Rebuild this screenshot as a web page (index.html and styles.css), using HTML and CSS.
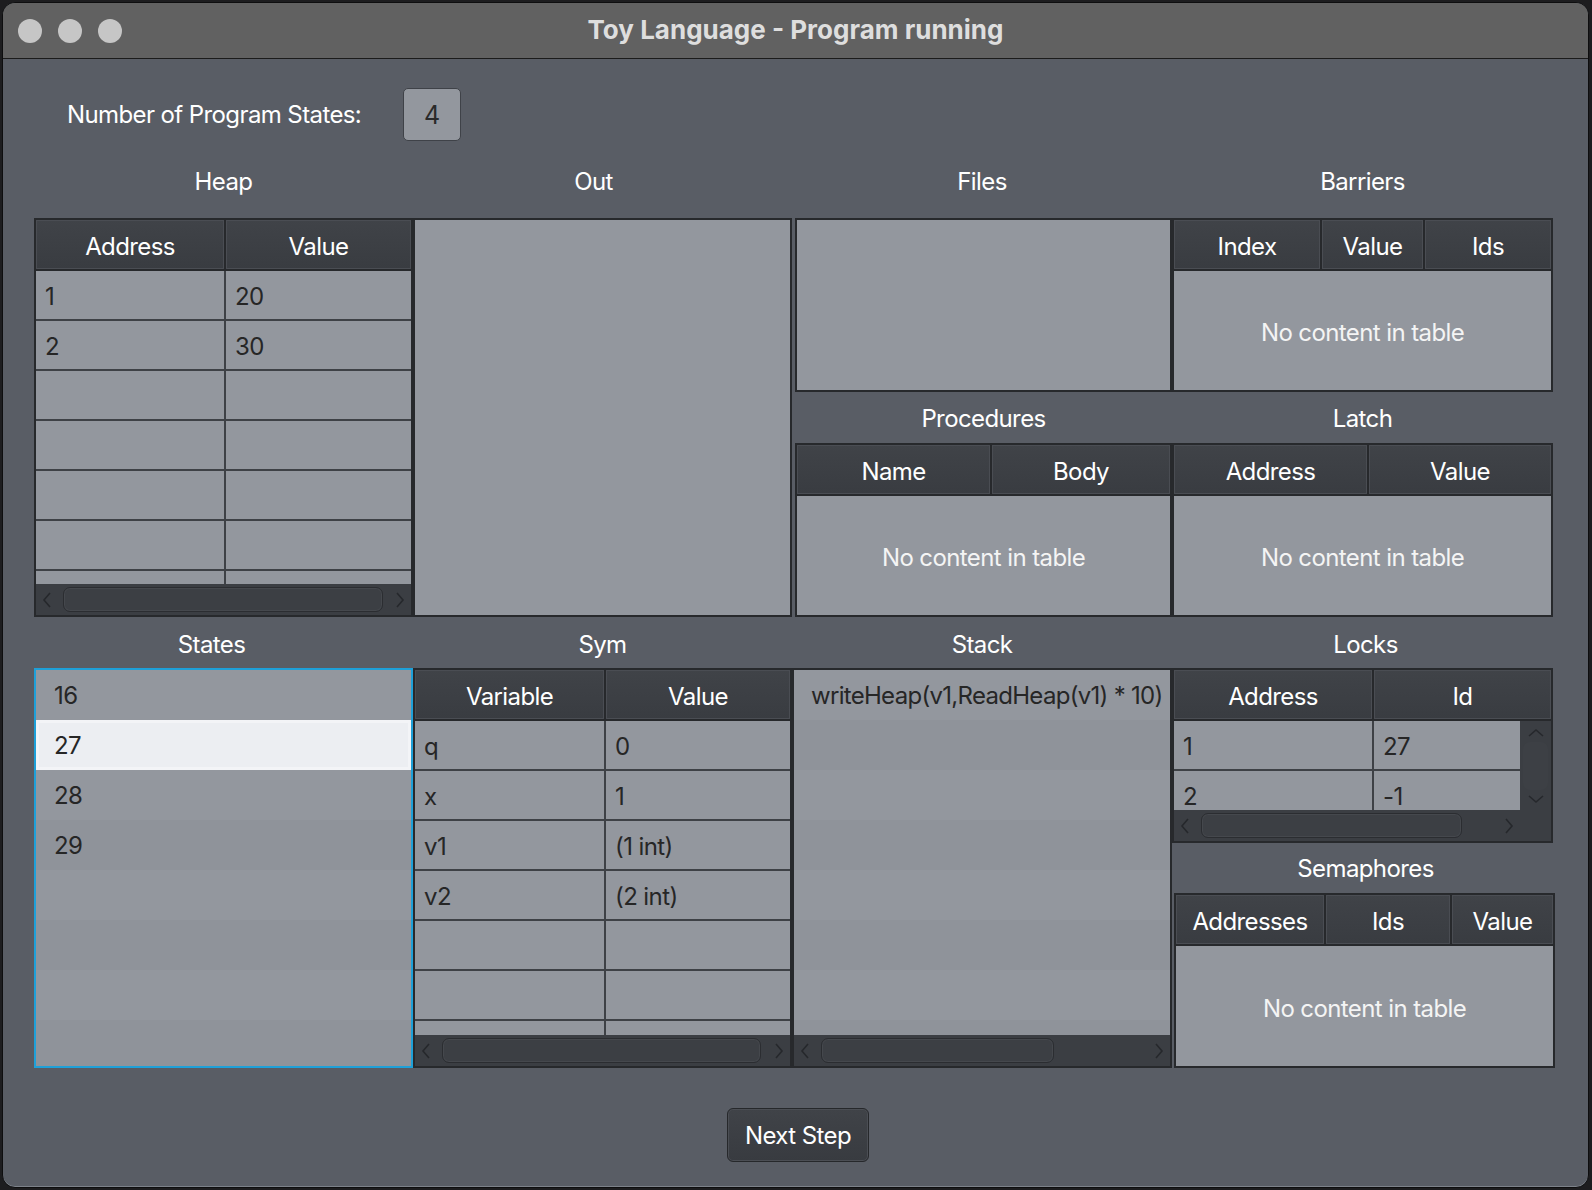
FILE: index.html
```html
<!DOCTYPE html>
<html lang="en">
<head>
<meta charset="utf-8">
<title>Toy Language - Program running</title>
<link rel="stylesheet" href="styles.css">
</head>
<body>
<div class="window">
  <header class="titlebar">
    <div class="lights"><span class="light"></span><span class="light"></span><span class="light"></span></div>
    <div class="title">Toy Language - Program running</div>
    <div></div>
  </header>

  <main class="content">
    <div class="count-row">
      <span class="count-label">Number of Program States:</span>
      <div class="count-box">4</div>
    </div>

    <div class="grid grid-top">
      <div class="label label-top c1">Heap</div>
      <div class="label label-top c2 out-label">Out</div>
      <div class="label label-top c3">Files</div>
      <div class="label label-top c4">Barriers</div>

      <div class="table c1 r-span">
        <div class="thead cols-heap"><div class="th">Address</div><div class="th">Value</div></div>
        <div class="tbody-wrap">
          <div class="tbody cols-heap">
            <div class="td">1</div><div class="td">20</div>
            <div class="td">2</div><div class="td">30</div>
            <div class="td"></div><div class="td"></div>
            <div class="td"></div><div class="td"></div>
            <div class="td"></div><div class="td"></div>
            <div class="td"></div><div class="td"></div>
            <div class="td"></div><div class="td"></div>
          </div>
        </div>
        <div class="hscroll">
          <svg class="arrow" viewBox="0 0 10 16"><polyline points="8,1 2,8 8,15"/></svg>
          <div class="thumb" style="width:320px"></div>
          <div class="spacer"></div>
          <svg class="arrow" viewBox="0 0 10 16"><polyline points="2,1 8,8 2,15"/></svg>
        </div>
      </div>

      <div class="box c2 r-span"></div>

      <div class="box c3 shift files"></div>

      <div class="table c4 barriers">
        <div class="thead cols-barriers"><div class="th">Index</div><div class="th">Value</div><div class="th">Ids</div></div>
        <div class="empty">No content in table</div>
      </div>

      <div class="label label-mid c3 shift">Procedures</div>
      <div class="label label-mid c4">Latch</div>

      <div class="table c3 shift procedures">
        <div class="thead cols-proc"><div class="th">Name</div><div class="th">Body</div></div>
        <div class="empty">No content in table</div>
      </div>
      <div class="table c4 latch">
        <div class="thead cols-latch"><div class="th">Address</div><div class="th">Value</div></div>
        <div class="empty">No content in table</div>
      </div>
    </div>

    <div class="grid grid-bottom">
      <div class="label label-bot c1 states-label">States</div>
      <div class="label label-bot c2">Sym</div>
      <div class="label label-bot c3">Stack</div>
      <div class="label label-bot c4 right-label">Locks</div>

      <div class="list states c1 r-span">
        <div class="li">16</div>
        <div class="li selected">27</div>
        <div class="li">28</div>
        <div class="li">29</div>
        <div class="li"></div>
        <div class="li"></div>
        <div class="li"></div>
        <div class="li"></div>
      </div>

      <div class="table c2 r-span sym">
        <div class="thead cols-sym"><div class="th">Variable</div><div class="th">Value</div></div>
        <div class="tbody-wrap">
          <div class="tbody cols-sym">
            <div class="td">q</div><div class="td">0</div>
            <div class="td">x</div><div class="td">1</div>
            <div class="td">v1</div><div class="td">(1 int)</div>
            <div class="td">v2</div><div class="td">(2 int)</div>
            <div class="td"></div><div class="td"></div>
            <div class="td"></div><div class="td"></div>
            <div class="td"></div><div class="td"></div>
          </div>
        </div>
        <div class="hscroll">
          <svg class="arrow" viewBox="0 0 10 16"><polyline points="8,1 2,8 8,15"/></svg>
          <div class="thumb" style="width:319px"></div>
          <div class="spacer"></div>
          <svg class="arrow" viewBox="0 0 10 16"><polyline points="2,1 8,8 2,15"/></svg>
        </div>
      </div>

      <div class="table c3 r-span stack">
        <div class="stack-list">
          <div class="li stack-item">writeHeap(v1,ReadHeap(v1) * 10)</div>
          <div class="li"></div>
          <div class="li"></div>
          <div class="li"></div>
          <div class="li"></div>
          <div class="li"></div>
          <div class="li"></div>
          <div class="li"></div>
        </div>
        <div class="hscroll">
          <svg class="arrow" viewBox="0 0 10 16"><polyline points="8,1 2,8 8,15"/></svg>
          <div class="thumb" style="width:233px"></div>
          <div class="spacer"></div>
          <svg class="arrow" viewBox="0 0 10 16"><polyline points="2,1 8,8 2,15"/></svg>
        </div>
      </div>

      <div class="table c4 locks">
        <div class="thead cols-locks"><div class="th">Address</div><div class="th">Id</div></div>
        <div class="locks-body">
          <div class="tbody-wrap">
            <div class="tbody cols-locks-body">
              <div class="td">1</div><div class="td">27</div>
              <div class="td">2</div><div class="td">-1</div>
            </div>
          </div>
          <div class="vscroll">
            <svg class="varrow" viewBox="0 0 16 10"><polyline points="1,8 8,2 15,8"/></svg>
            <div class="vthumb"></div>
            <svg class="varrow" viewBox="0 0 16 10"><polyline points="1,2 8,8 15,2"/></svg>
          </div>
        </div>
        <div class="scroll-row">
          <div class="hscroll">
            <svg class="arrow" viewBox="0 0 10 16"><polyline points="8,1 2,8 8,15"/></svg>
            <div class="thumb" style="width:261px"></div>
            <div class="spacer"></div>
            <svg class="arrow" viewBox="0 0 10 16"><polyline points="2,1 8,8 2,15"/></svg>
          </div>
          <div class="corner"></div>
        </div>
      </div>

      <div class="label label-sem c4 right-label">Semaphores</div>

      <div class="table c4 semaphores">
        <div class="thead cols-sem"><div class="th">Addresses</div><div class="th">Ids</div><div class="th">Value</div></div>
        <div class="empty">No content in table</div>
      </div>
    </div>

    <div class="actions">
      <button class="btn" type="button">Next Step</button>
    </div>
  </main>
</div>
</body>
</html>
```

FILE: styles.css
```css
* { box-sizing: border-box; }

html, body {
  margin: 0;
  padding: 0;
}

body {
  width: 1592px;
  height: 1190px;
  background: #1d1d1f;
  padding: 2px 3px 2px 2px;
  overflow: hidden;
  font-family: Inter, "Noto Sans", "Liberation Sans", sans-serif;
  font-size: 24px;
  letter-spacing: -0.6px;
  color: #ffffff;
}

.window {
  width: 1587px;
  height: 1186px;
  border: 1px solid #0e0e0f;
  border-radius: 13px;
  overflow: hidden;
  background: #595d65;
  display: flex;
  flex-direction: column;
  box-shadow: inset 0 -1px 0 #7d828a;
}

/* ---------- title bar ---------- */
.titlebar {
  flex: none;
  height: 56px;
  background: #616161;
  border-bottom: 1px solid #1b1b1b;
  display: grid;
  grid-template-columns: 1fr auto 1fr;
  align-items: center;
}

.lights {
  display: flex;
  gap: 16px;
  padding-left: 15px;
}

.light {
  width: 24px;
  height: 24px;
  border-radius: 50%;
  background: #c6c6c6;
}

.title {
  font-family: Inter, "Noto Sans", sans-serif;
  font-weight: 700;
  font-size: 26px;
  color: #dedede;
  letter-spacing: 0;
  margin-top: -2px;
}

/* ---------- content ---------- */
.content {
  flex: 1;
  display: flex;
  flex-direction: column;
  padding: 0 0 0 31px;
}

.count-row {
  display: flex;
  align-items: center;
  margin-top: 29px;
  height: 53px;
  padding-left: 33px;
}

.count-label {
  width: 336px;
  font-size: 24px;
  color: #ffffff;
}

.count-box {
  width: 58px;
  height: 53px;
  border-radius: 5px;
  border: 1px solid #3f4248;
  background: #93979e;
  color: #2a2a2a;
  display: flex;
  align-items: center;
  justify-content: center;
  font-size: 25px;
  letter-spacing: 0;
}

/* ---------- grids ---------- */
.grid {
  display: grid;
  grid-template-columns: 379px 379px 380px 381px;
}

.grid-top {
  grid-template-rows: 77px 174px 51px 174px;
}

.grid-bottom {
  grid-template-rows: 51px 175px 50px 175px;
}

.c1 { grid-column: 1; }
.c2 { grid-column: 2; }
.c3 { grid-column: 3; }
.c4 { grid-column: 4; }
.r-span { grid-row: 2 / 5; }
.shift { margin-left: 3px; }

.label {
  text-align: center;
  line-height: 40px;
  font-size: 24px;
  color: #ffffff;
  white-space: nowrap;
}

.label-top { padding-top: 21px; }
.label-mid { padding-top: 7px; grid-row: 3; }
.label-bot { padding-top: 8px; }
.label-sem { padding-top: 6px; grid-row: 3; }

.out-label { padding-right: 18px; }
.states-label { padding-right: 24px; }
.right-label { padding-left: 6px; }

.files { grid-row: 2; }
.barriers { grid-row: 2; }
.procedures { grid-row: 4; }
.latch { grid-row: 4; }
.locks { grid-row: 2; }
.semaphores { grid-row: 4; margin-left: 2px; margin-right: -2px; }

/* ---------- boxes and tables ---------- */
.box {
  border: 2px solid #27292c;
  background: #93979e;
}

.table {
  border: 2px solid #27292c;
  background: #27292c;
  display: flex;
  flex-direction: column;
  overflow: hidden;
  min-height: 0;
}

.thead {
  flex: none;
  display: grid;
  gap: 2px;
  background: #27292c;
  margin-bottom: 2px;
}

.th {
  height: 49px;
  padding-top: 3px;
  background: linear-gradient(#404348, #393c41);
  box-shadow: inset 0 0 0 1px #4a4d53;
  display: flex;
  align-items: center;
  justify-content: center;
  color: #ffffff;
  font-size: 24px;
  white-space: nowrap;
}

.cols-heap { grid-template-columns: 188px 1fr; }
.cols-sym { grid-template-columns: 189px 1fr; }
.cols-barriers { grid-template-columns: 146px 101px 1fr; }
.cols-proc { grid-template-columns: 193px 1fr; }
.cols-latch { grid-template-columns: 193px 1fr; }
.cols-locks { grid-template-columns: 198px 1fr; }
.cols-locks-body { grid-template-columns: 198px 1fr; }
.cols-sem { grid-template-columns: 148px 124px 1fr; }

.tbody-wrap {
  flex: 1;
  min-height: 0;
  overflow: hidden;
  background: #93979e;
}

.tbody {
  display: grid;
  grid-auto-rows: 48px;
  gap: 2px;
  background: #3e4146;
  padding-bottom: 2px;
}

.td {
  background: #93979e;
  color: #262626;
  font-size: 24px;
  display: flex;
  align-items: center;
  padding-left: 9px;
  padding-top: 3px;
  white-space: nowrap;
}

.empty {
  flex: 1;
  background: #93979e;
  display: flex;
  align-items: center;
  justify-content: center;
  padding-top: 4px;
  color: #f4f4f4;
  font-size: 24px;
}

/* ---------- scrollbars ---------- */
.hscroll {
  flex: none;
  height: 31px;
  background: #3b3e43;
  display: flex;
  align-items: center;
  padding: 0 6px 0 6px;
}

.arrow {
  width: 10px;
  height: 16px;
  flex: none;
}

.arrow polyline, .varrow polyline {
  fill: none;
  stroke: #26282c;
  stroke-width: 1.6;
}

.thumb {
  flex: none;
  height: 25px;
  margin-left: 11px;
  border-radius: 7px;
  border: 1px solid #2b2d31;
  background: #3c3f44;
  box-shadow: inset 0 0 0 1px #45484d;
}

.spacer { flex: 1; }

/* ---------- list views ---------- */
.list {
  border: 2px solid #1ea0d8;
  background: #93979e;
  overflow: hidden;
}

.li {
  height: 50px;
  display: flex;
  align-items: center;
  padding-left: 18px;
  color: #262626;
  font-size: 24px;
  background: #93979e;
  white-space: nowrap;
}

.li:nth-child(even) { background: #8f939a; }

.li.selected {
  background: #eceef2;
  box-shadow: inset 0 0 0 3px #f3f4f7;
}

.stack {
  background: #27292c;
}

.stack-list {
  flex: 1;
  min-height: 0;
  overflow: hidden;
  background: #93979e;
}

.stack-list .li {
  padding-left: 17px;
}

.stack-item {
  letter-spacing: -0.7px;
}

/* ---------- locks ---------- */
.locks-body {
  flex: 1;
  min-height: 0;
  display: flex;
  background: #93979e;
}

.locks-body .tbody-wrap { flex: 1; }

.vscroll {
  flex: none;
  width: 31px;
  background: #3b3e43;
  display: flex;
  flex-direction: column;
  align-items: center;
  padding: 7px 0 6px;
}

.varrow {
  width: 16px;
  height: 10px;
  flex: none;
}

.vthumb {
  flex: 1;
  width: 25px;
  margin: 4px 0;
  border-radius: 7px;
  background: #3d4045;
}

.scroll-row {
  flex: none;
  display: flex;
  background: #3b3e43;
}

.scroll-row .hscroll { flex: 1; }

.corner {
  width: 31px;
  background: #3b3e43;
}

/* ---------- actions ---------- */
.actions {
  display: flex;
  justify-content: center;
  margin-top: 40px;
  padding-right: 26px;
}

.btn {
  width: 142px;
  height: 54px;
  border-radius: 6px;
  border: 1px solid #26282b;
  background: linear-gradient(#404348, #383b40);
  box-shadow: inset 0 0 0 1px #4b4e54;
  color: #ffffff;
  font-family: Inter, "Noto Sans", sans-serif;
  font-size: 24px;
  letter-spacing: -0.6px;
  padding: 0;
}
```
